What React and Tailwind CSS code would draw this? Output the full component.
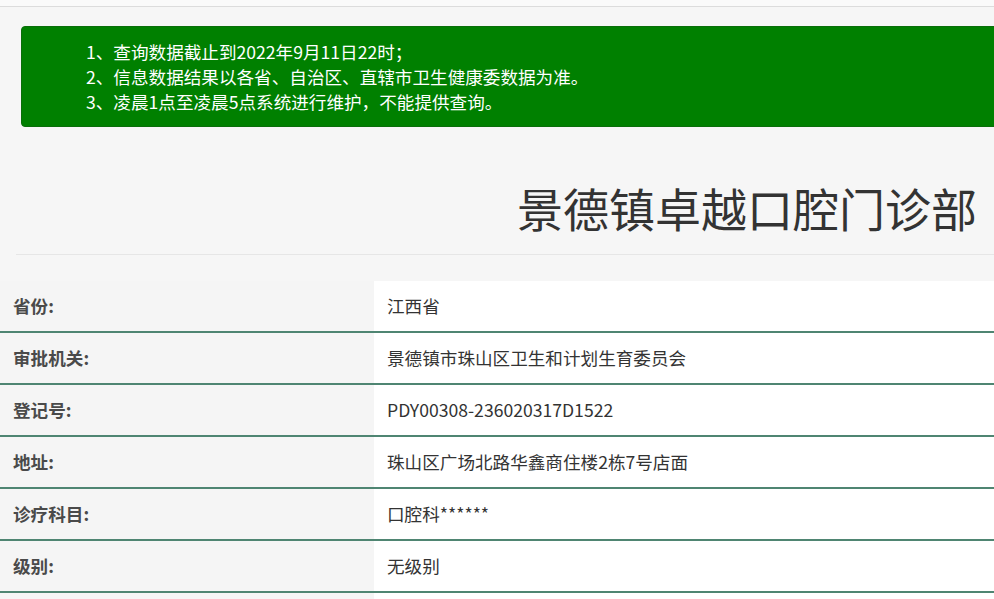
import React from "react";

const rows = [
  ["省份:", "江西省"],
  ["审批机关:", "景德镇市珠山区卫生和计划生育委员会"],
  ["登记号:", "PDY00308-236020317D1522"],
  ["地址:", "珠山区广场北路华鑫商住楼2栋7号店面"],
  ["诊疗科目:", "口腔科******"],
  ["级别:", "无级别"],
  ["", ""],
];

const App = () => {
  return (
    <div
      className="min-h-screen overflow-hidden bg-[#f6f6f6] text-[#333]"
      style={{ fontFamily: '"Microsoft YaHei", "Noto Sans CJK SC", "Noto Sans", sans-serif' }}
    >
      <div className="h-[7px] bg-[#fafafa] border-b border-[#dcdcdc]"></div>

      {/* notice */}
      <div className="ml-[21px] mr-[-20px] mt-[19px] h-[101px] rounded-[4px] bg-[#008000] border border-[#0a6e0a] pl-[64px] pt-[12px] text-[17.6px] leading-[25px] text-white">
        <p>1、查询数据截止到2022年9月11日22时；</p>
        <p>2、信息数据结果以各省、自治区、直辖市卫生健康委数据为准。</p>
        <p>3、凌晨1点至凌晨5点系统进行维护，不能提供查询。</p>
      </div>

      <h1 className="mt-[47px] pr-[17px] text-right text-[46px] leading-[66px] font-normal text-[#333]">
        景德镇卓越口腔门诊部
      </h1>
      <div className="ml-[16px] mt-[14px] border-t border-[#e6e6e6]"></div>

      <div className="mt-[26px]">
        {rows.map(([label, value], i) => (
          <div key={i} className="flex h-[52px] border-b-2 border-[#4f8572]">
            <div className="w-[374px] bg-[#f5f5f5] pl-[13px] flex items-center text-[17.6px] font-bold text-[#4a4a4a]">
              {label}
            </div>
            <div className="flex-1 bg-white pl-[13px] flex items-center text-[17.6px] text-[#333]">
              {value}
            </div>
          </div>
        ))}
      </div>
    </div>
  );
};

export default App;
